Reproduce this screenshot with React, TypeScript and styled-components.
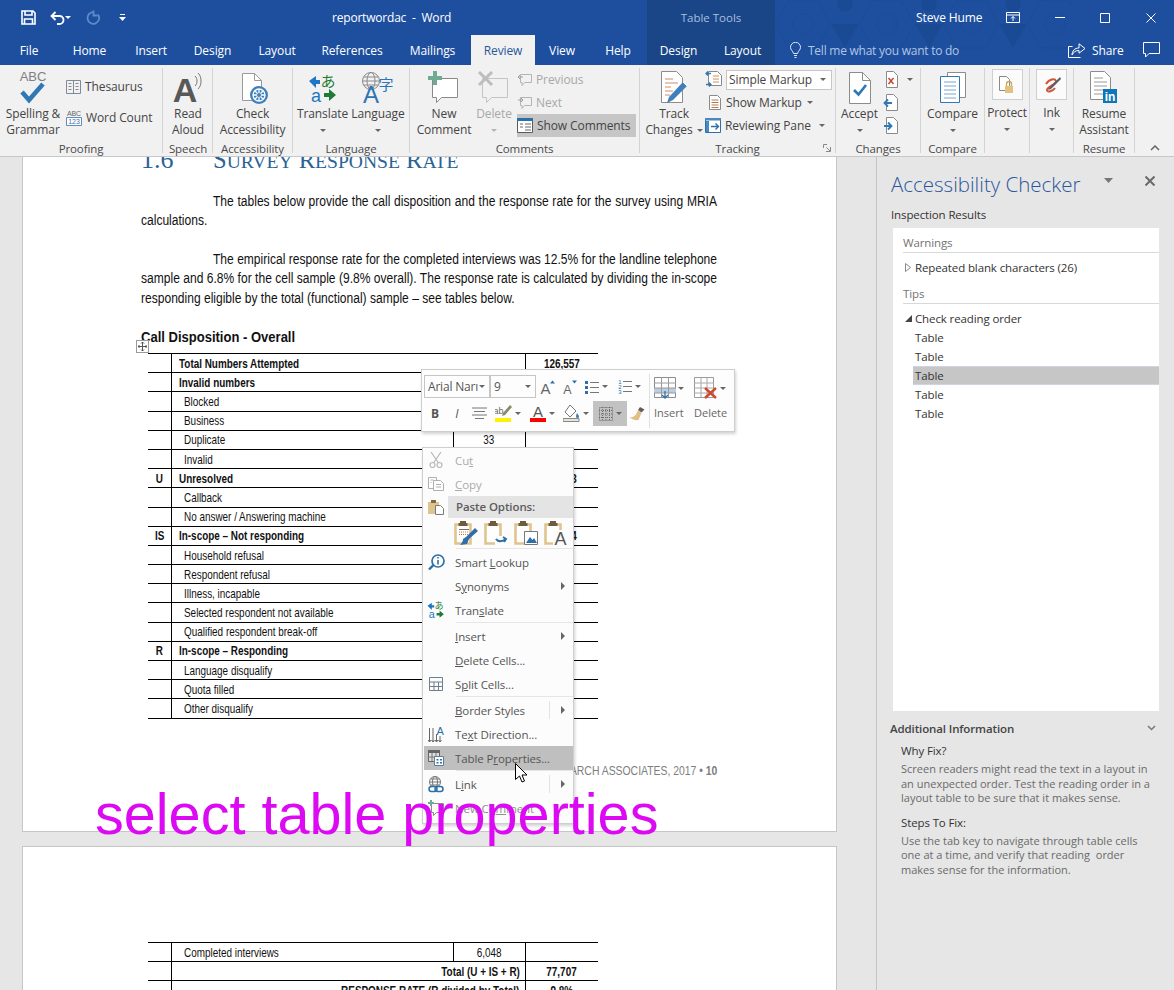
import React from 'react';
import styled, { createGlobalStyle } from 'styled-components';

const GlobalStyle = createGlobalStyle`
  html, body { margin: 0; padding: 0; background: #e6e6e6; }
  body { font-family: "Open Sans", "Noto Sans", Arial, sans-serif; font-size: 12px; color: #444; }
  svg { display: block; flex: none; }
`;

const arial = `"Liberation Sans", Arial, sans-serif`;
// Arial Narrow isn't installed, Liberation Sans squeezed to its width
const squeeze = 0.82;

const Window = styled.div`
  position: relative;
  width: 1174px;
  height: 990px;
  overflow: hidden;
  display: flex;
  flex-direction: column;
`;

/* ---------- title bar + tabs ---------- */
const Header = styled.div`
  position: relative;
  background: #1e4f9f;
  color: #fff;
  flex: none;
`;
const Pattern = styled.svg`
  position: absolute;
  left: 775px;
  top: 0;
`;
const TitleRow = styled.div`
  position: relative;
  display: flex;
  height: 35px;
  align-items: stretch;
`;
const LeftZone = styled.div`
  width: 647px;
  display: flex;
  align-items: center;
  padding-left: 21px;
  box-sizing: border-box;
`;
const QatSlot = styled.div<{ $w: number }>`
  width: ${(p) => p.$w}px;
  display: flex;
  align-items: center;
`;
const DocTitle = styled.div`
  margin-left: 206px;
  font-size: 12px;
  letter-spacing: -0.2px;
  white-space: pre;
`;
const ToolsLabel = styled.div`
  width: 128px;
  background: #1a4687;
  color: #a6bfe2;
  font-size: 11.5px;
  display: flex;
  align-items: center;
  justify-content: center;
`;
const RightZone = styled.div`
  flex: 1;
  display: flex;
  align-items: center;
  padding-left: 141px;
`;
const UserName = styled.div`
  width: 90px;
  font-size: 12px;
  letter-spacing: -0.1px;
`;
const WinButton = styled.div<{ $w: number }>`
  width: ${(p) => p.$w}px;
  display: flex;
  align-items: center;
`;
const TabRow = styled.div`
  position: relative;
  display: flex;
  height: 30px;
  align-items: stretch;
`;
const Tab = styled.div<{ $w: number; $active?: boolean; $context?: boolean }>`
  width: ${(p) => p.$w}px;
  display: flex;
  align-items: center;
  justify-content: center;
  font-size: 12px;
  letter-spacing: -0.1px;
  color: ${(p) => (p.$active ? '#2b579a' : '#fff')};
  background: ${(p) => (p.$active ? '#f1f1f1' : p.$context ? '#1a4687' : 'transparent')};
`;
const TellMe = styled.div`
  margin-left: 15px;
  display: flex;
  align-items: center;
  gap: 7px;
  color: #b0c5e4;
  font-size: 12px;
  letter-spacing: -0.25px;
`;
const ShareBox = styled.div`
  margin-left: auto;
  display: flex;
  align-items: center;
  gap: 6px;
  padding-right: 14px;
`;
const ShareLabel = styled.span`
  width: 45px;
  letter-spacing: -0.1px;
`;

/* ---------- ribbon ---------- */
const Ribbon = styled.div`
  flex: none;
  height: 92px;
  box-sizing: border-box;
  background: #f1f1f1;
  border-bottom: 1px solid #c8c8c8;
  display: flex;
  padding-top: 3px;
  position: relative;
  z-index: 2;
  letter-spacing: -0.1px;
`;
const Group = styled.div<{ $w: number; $last?: boolean }>`
  width: ${(p) => p.$w}px;
  height: 85px;
  box-sizing: border-box;
  border-right: ${(p) => (p.$last ? 'none' : '1px solid #d4d4d4')};
  display: grid;
  grid-template-rows: 73px 12px;
  flex: none;
`;
const GroupBody = styled.div`
  display: flex;
  align-items: flex-start;
`;
const GroupLabel = styled.div`
  display: flex;
  justify-content: center;
  align-items: center;
  height: 14px;
  font-size: 11.5px;
  color: #4a4a4a;
  position: relative;
`;
const Launcher = styled.div`
  position: absolute;
  right: 4px;
  top: 3px;
`;
const Large = styled.div<{ $w: number; $dim?: boolean }>`
  width: ${(p) => p.$w}px;
  flex: none;
  display: flex;
  flex-direction: column;
  align-items: center;
  padding-top: 2px;
  font-size: 12px;
  line-height: 16px;
  text-align: center;
  color: ${(p) => (p.$dim ? '#a8a8a8' : '#444')};
  white-space: nowrap;
`;
const LargeText = styled.div``;
const CaretAfter = styled.span`
  display: inline-block;
  vertical-align: middle;
  margin-left: 4px;
  width: 0;
  height: 0;
  border-left: 3px solid transparent;
  border-right: 3px solid transparent;
  border-top: 3px solid #666;
`;
const IconSlot = styled.div`
  height: 36px;
  display: flex;
  align-items: center;
  justify-content: center;
`;
const FramedIcon = styled.div`
  width: 29px;
  height: 29px;
  background: #fbfbfb;
  border: 1px solid #cfcfcf;
  display: flex;
  align-items: center;
  justify-content: center;
  margin-bottom: 5px;
  margin-top: -1px;
`;
const Caret = styled.span<{ $c?: string }>`
  display: inline-block;
  width: 0;
  height: 0;
  border-left: 3px solid transparent;
  border-right: 3px solid transparent;
  border-top: 3px solid ${(p) => p.$c ?? '#666'};
  flex: none;
`;
const CaretLine = styled.div`
  height: 16px;
  display: flex;
  align-items: center;
  justify-content: center;
`;
const SmallCol = styled.div<{ $ml?: number; $rowH?: number; $pt?: number }>`
  margin-left: ${(p) => p.$ml ?? 0}px;
  padding-top: ${(p) => p.$pt ?? 0}px;
  display: grid;
  grid-auto-rows: ${(p) => p.$rowH ?? 23}px;
`;
const SmallRow = styled.div<{ $dim?: boolean; $on?: boolean; $w?: number; $gap?: number; $ml?: number }>`
  display: flex;
  align-items: center;
  gap: ${(p) => p.$gap ?? 4}px;
  margin-left: ${(p) => p.$ml ?? 0}px;
  width: ${(p) => (p.$w ? `${p.$w}px` : 'auto')};
  font-size: 12px;
  white-space: nowrap;
  color: ${(p) => (p.$dim ? '#a8a8a8' : '#444')};
  background: ${(p) => (p.$on ? '#c6c6c6' : 'transparent')};
`;
const MarkupBox = styled.div`
  width: 106px;
  height: 20px;
  box-sizing: border-box;
  background: #fff;
  border: 1px solid #c6c6c6;
  display: flex;
  align-items: center;
  justify-content: space-between;
  padding: 0 5px 0 2px;
`;
const SpreadLabel = styled.span<{ $w: number }>`
  width: ${(p) => p.$w}px;
  display: inline-flex;
  justify-content: space-between;
  align-items: center;
`;

/* ---------- document ---------- */
const Body = styled.div`
  flex: 1;
  display: flex;
  min-height: 0;
`;
const DocArea = styled.div`
  width: 876px;
  flex: none;
  overflow: hidden;
  padding-left: 22px;
  box-sizing: border-box;
  background: #e6e6e6;
`;
const Page = styled.div<{ $first?: boolean }>`
  width: 815px;
  box-sizing: border-box;
  background: #fff;
  border: 1px solid #c6c6c6;
  padding-left: 118px;
  margin-top: ${(p) => (p.$first ? '-40px' : '14px')};
  height: ${(p) => (p.$first ? '715px' : '300px')};
  padding-top: ${(p) => (p.$first ? '30px' : '95px')};
  font-family: ${arial};
  color: #111;
`;
const Heading = styled.div`
  display: flex;
  height: 24px;
  font-family: "Liberation Serif", "Times New Roman", serif;
  font-size: 24.5px;
  line-height: 24px;
  color: #2a6396;
  white-space: pre;
`;
const HeadingNum = styled.span`
  width: 72px;
  font-size: 26px;
`;
const SmallCap = styled.span`
  font-size: 0.8em;
`;
const Para = styled.div<{ $mt?: number }>`
  width: ${576 / squeeze}px;
  font-size: 14.7px;
  line-height: 19.4px;
  margin-top: ${(p) => p.$mt ?? 20}px;
  transform: scaleX(${squeeze});
  transform-origin: left top;
`;
const Line = styled.div<{ $indent?: boolean; $just?: boolean }>`
  padding-left: ${(p) => (p.$indent ? `${72 / squeeze}px` : '0')};
  text-align: ${(p) => (p.$just ? 'justify' : 'left')};
  text-align-last: ${(p) => (p.$just ? 'justify' : 'left')};
`;
const TableTitle = styled.div`
  position: relative;
  margin-top: 20px;
  font-weight: bold;
  font-size: 14px;
  line-height: 19px;
  height: 25px;
`;
const TitleText = styled.span`
  display: inline-block;
  transform: scaleX(0.93);
  transform-origin: left;
`;
const MoveHandle = styled.div`
  position: absolute;
  left: -5px;
  top: 12px;
  width: 11px;
  height: 11px;
  background: #fff;
  border: 1px solid #9a9a9a;
  display: flex;
  align-items: center;
  justify-content: center;
`;
const DataTable = styled.table`
  margin-left: 7px;
  width: 450px;
  table-layout: fixed;
  border-collapse: collapse;
`;
const Row = styled.tr`
  height: 19.2px;
`;
const Cell = styled.td<{ $bold?: boolean; $align?: string; $indent?: number; $noLeft?: boolean }>`
  box-sizing: border-box;
  padding: 1px ${(p) => (p.$align === 'right' ? '5px' : '0')} 0 ${(p) => p.$indent ?? 0}px;
  height: 19.2px;
  font-size: 12.1px;
  line-height: 14px;
  white-space: nowrap;
  font-weight: ${(p) => (p.$bold ? 'bold' : 'normal')};
  text-align: ${(p) => p.$align ?? 'left'};
  border-top: 1.4px solid #000;
  border-bottom: 1.4px solid #000;
  border-left: ${(p) => (p.$noLeft ? 'none' : '1.4px solid #000')};
`;
const CellText = styled.span<{ $origin?: string }>`
  display: inline-block;
  transform: scaleX(${squeeze});
  transform-origin: ${(p) => p.$origin ?? 'left'} center;
`;
const PageFooter = styled.div`
  width: 576px;
  margin-top: 45px;
  text-align: right;
  font-size: 12.7px;
  color: #7d7d7d;
  white-space: nowrap;
`;
const FooterText = styled.span`
  display: inline-block;
  transform: scaleX(${squeeze});
  transform-origin: right center;
`;

/* ---------- task pane ---------- */
const Pane = styled.div`
  flex: 1;
  box-sizing: border-box;
  border-left: 1px solid #c4c4c4;
  background: #e6e6e6;
  padding: 13px 15px 0 14px;
  display: flex;
  flex-direction: column;
  font-size: 11.5px;
  letter-spacing: -0.12px;
`;
const PaneTop = styled.div`
  display: flex;
  align-items: center;
  height: 28px;
`;
const PaneTitle = styled.div`
  font-size: 20.5px;
  font-weight: 300;
  letter-spacing: 0;
  color: #2b579a;
  width: 213px;
  white-space: nowrap;
`;
const PaneMenu = styled.div`
  padding-bottom: 7px;
`;
const PaneClose = styled.div`
  margin-left: 32px;
  padding-bottom: 7px;
`;
const Inspection = styled.div`
  margin-top: 8px;
  line-height: 18px;
  color: #333;
`;
const ListBox = styled.div`
  margin: 4px 0 0 2px;
  height: 483px;
  box-sizing: border-box;
  background: #fff;
  padding: 7px 0 0 10px;
`;
const ListHead = styled.div`
  height: 17px;
  line-height: 15px;
  color: #737373;
  border-bottom: 1px solid #d8d8d8;
`;
const ListRow = styled.div<{ $sel?: boolean }>`
  height: 19px;
  box-sizing: border-box;
  margin-left: 10px;
  padding-left: 2px;
  line-height: 19px;
  color: #333;
  background: ${(p) => (p.$sel ? '#c6c6c6' : 'transparent')};
  border-top: 1px solid ${(p) => (p.$sel ? '#cfd4e4' : 'transparent')};
  border-bottom: 1px solid ${(p) => (p.$sel ? '#cfd4e4' : 'transparent')};
  display: flex;
  align-items: center;
`;
const ListGroup = styled.div`
  margin-bottom: 9px;
  padding-top: 5px;
`;
const Twist = styled.span`
  width: 10px;
  margin-left: -10px;
  display: inline-flex;
  flex: none;
`;
const InfoHead = styled.div`
  display: flex;
  align-items: center;
  justify-content: space-between;
  margin: 8px 0 0 -1px;
  height: 18px;
  font-weight: 600;
  color: #444;
  padding-right: 3px;
`;
const InfoTitle = styled.div`
  margin: 5px 0 0 10px;
  line-height: 17px;
  color: #333;
`;
const InfoText = styled.div`
  margin: 3px 0 0 10px;
  font-size: 11px;
  line-height: 14.6px;
  color: #6a6a6a;
  letter-spacing: 0;
  white-space: pre;
  & + ${InfoTitle} {
    margin-top: 8px;
  }
`;

/* ---------- overlays ---------- */
const MiniBar = styled.div`
  position: absolute;
  left: 421px;
  top: 369px;
  width: 314px;
  height: 63px;
  box-sizing: border-box;
  background: #fdfdfd;
  border: 1px solid #cdcdcd;
  box-shadow: 1px 2px 3px rgba(0, 0, 0, 0.18);
  display: flex;
  padding: 4px 0 0 2px;
  z-index: 3;
`;
const MiniLeft = styled.div`
  width: 225px;
  display: flex;
  flex-direction: column;
  gap: 2px;
  border-right: 1px solid #e0e0e0;
  height: 54px;
`;
const MiniRow = styled.div`
  display: flex;
  align-items: center;
  height: 25px;
`;
const Combo = styled.div<{ $w: number }>`
  width: ${(p) => p.$w}px;
  height: 23px;
  box-sizing: border-box;
  border: 1px solid #c6c6c6;
  display: flex;
  align-items: center;
  justify-content: space-between;
  padding: 0 4px 0 3px;
  color: #555;
  font-size: 12px;
  letter-spacing: -0.2px;
  white-space: nowrap;
  overflow: hidden;
`;
const MiniTool = styled.div<{ $w: number; $on?: boolean }>`
  width: ${(p) => p.$w}px;
  height: 25px;
  display: flex;
  align-items: center;
  justify-content: center;
  gap: 3px;
  color: #555;
  background: ${(p) => (p.$on ? '#c2c2c2' : 'transparent')};
  flex: none;
`;
const MiniRight = styled.div`
  display: flex;
  padding-left: 4px;
`;
const TableTool = styled.div`
  width: 40px;
  display: flex;
  flex-direction: column;
  align-items: flex-start;
  font-size: 11px;
  color: #666;
  line-height: 16px;
`;
const TableToolIcon = styled.div`
  height: 28px;
  display: flex;
  align-items: center;
  gap: 2px;
  margin-bottom: 3px;
`;
const Menu = styled.div`
  position: absolute;
  left: 422px;
  top: 447px;
  width: 152px;
  height: 377px;
  box-sizing: border-box;
  background: #fcfcfc;
  border: 1px solid #cfcfcf;
  box-shadow: 1px 2px 3px rgba(0, 0, 0, 0.18);
  padding: 0 0 0 1px;
  z-index: 3;
  font-size: 11.5px;
  letter-spacing: -0.1px;
`;
const MenuItem = styled.div<{ $dim?: boolean; $active?: boolean; $soft?: boolean }>`
  width: 149px;
  height: 24px;
  display: grid;
  grid-template-columns: 31px 1fr 24px;
  align-items: center;
  color: ${(p) => (p.$dim ? '#ababab' : p.$soft ? '#8e8e8e' : '#555')};
  background: ${(p) => (p.$active ? '#bfbfbf' : 'transparent')};
  white-space: nowrap;
`;
const MenuIcon = styled.div`
  width: 24px;
  display: flex;
  justify-content: center;
`;
const MenuArrow = styled.div<{ $split?: boolean }>`
  height: 18px;
  display: flex;
  align-items: center;
  justify-content: flex-end;
  padding-right: 8px;
  position: relative;
  border-left: ${(p) => (p.$split ? '1px solid #e4e4e4' : 'none')};
  &::after {
    content: '';
    width: 0;
    height: 0;
    border-top: 4px solid transparent;
    border-bottom: 4px solid transparent;
    border-left: 4px solid #666;
  }
`;
const MenuSep = styled.div`
  height: 2px;
  margin-left: 32px;
  width: 117px;
  background: linear-gradient(#e6e6e6 50%, transparent 50%);
`;
const PasteHead = styled.div`
  display: flex;
  height: 22px;
  align-items: center;
`;
const PasteIconWrap = styled.div`
  width: 24px;
  display: flex;
  justify-content: center;
`;
const PasteLabel = styled.div`
  width: 125px;
  height: 22px;
  box-sizing: border-box;
  padding-left: 8px;
  background: #e4e4e4;
  font-weight: 600;
  color: #5c5c5c;
  line-height: 22px;
`;
const PasteRow = styled.div`
  height: 30px;
  padding-left: 30px;
  display: flex;
  gap: 6px;
  align-items: center;
`;
const Caption = styled.div`
  position: absolute;
  left: 95px;
  top: 780px;
  z-index: 4;
  font-family: ${arial};
  font-size: 57.6px;
  line-height: 68px;
  color: #dc0af2;
  white-space: nowrap;
`;
const Pointer = styled.svg`
  position: absolute;
  left: 515px;
  top: 763px;
  z-index: 5;
`;

/* ---------- drawings ---------- */
const uiFont = 'Liberation Sans, Arial, sans-serif';
const cjk = 'Noto Sans CJK JP, sans-serif';
const blue = '#2f77b5';
const tan = '#e0c48f';

const SaveIcon = () => (
  <svg width="15" height="15" viewBox="0 0 15 15" fill="none" stroke="#fff" strokeWidth="1.6">
    <path d="M1 1h11l2 2v11H1z" />
    <path d="M4 1v4h7V1M3.500 14V9h8v5" />
  </svg>
);
const UndoIcon = () => (
  <svg width="15" height="14" viewBox="0 0 15 14" fill="none" stroke="#fff" strokeWidth="1.8">
    <path d="M5.500 1 1.500 5l4 4" />
    <path d="M2 5h7.500a4 4 0 0 1 0 8H7" />
  </svg>
);
const RedoIcon = () => (
  <svg width="14" height="15" viewBox="0 0 14 15" fill="none" stroke="#5e8aca" strokeWidth="1.800">
    <path d="M8 2.200a5.800 5.800 0 1 0 4 2.300" />
    <path d="M7.500.5v5h4" />
  </svg>
);
const CustomizeIcon = () => (
  <svg width="7" height="8" viewBox="0 0 7 8" fill="#fff">
    <path d="M1 0h5v1H1zM0 3h7L3.500 7z" />
  </svg>
);
const DisplayIcon = () => (
  <svg width="14" height="11" viewBox="0 0 14 11" fill="none" stroke="#fff">
    <path d="M.5.5h13v10H.5zM.5 3h13" />
    <path d="M7 9V4.500M5 6.500l2-2 2 2" />
  </svg>
);
const MinIcon = () => (
  <svg width="10" height="2" viewBox="0 0 10 2"><path d="M0 .5h10" stroke="#fff" /></svg>
);
const MaxIcon = () => (
  <svg width="10" height="10" viewBox="0 0 10 10"><path d="M.5.5h9v9h-9z" fill="none" stroke="#fff" /></svg>
);
const CloseIcon = ({ c = '#fff', s = 10, w = 1 }: { c?: string; s?: number; w?: number }) => (
  <svg width={s} height={s} viewBox="0 0 10 10"><path d="M.5.5l9 9M9.500.5l-9 9" stroke={c} strokeWidth={w} /></svg>
);
const BulbIcon = () => (
  <svg width="11" height="16" viewBox="0 0 11 16" fill="none" stroke="#dfe8f5">
    <path d="M3.500 11.500C3 9 .5 8 .5 5.300a5 5 0 0 1 10 0c0 2.700-2.500 3.700-3 6.200zM4 13.500h3M4.500 15.500h2" />
  </svg>
);
const ShareIcon = () => (
  <svg width="18" height="15" viewBox="0 0 18 15" fill="none" stroke="#fff">
    <path d="M12.500 14.500H.5V3.500h4" />
    <path d="M11 .8 17 5.500l-6 4.700V7.500C7.500 7.500 5.500 9 4 12c.2-4 2.500-7 7-7z" />
  </svg>
);
const CommentIcon = () => (
  <svg width="17" height="16" viewBox="0 0 17 16" fill="none" stroke="#fff">
    <path d="M.5.5h16v11H6l-3.500 3.500v-3.500h-2z" />
  </svg>
);
const SpellIcon = () => (
  <svg width="34" height="36" viewBox="0 0 34 36">
    <text x="17" y="11" textAnchor="middle" fontFamily={uiFont} fontSize="13" fill="#808080">ABC</text>
    <path d="M6 22l7 8 14-16" fill="none" stroke={blue} strokeWidth="4.500" />
  </svg>
);
const ThesaurusIcon = () => (
  <svg width="15" height="14" viewBox="0 0 15 14" fill="none" stroke="#7c8b9b">
    <path d="M.5.500h14v13H.5zM7.500.5v13" />
    <path d="M2.500 3.500h3M2.500 6.500h3M2.500 9.500h3M9.500 3.500h3M9.500 6.500h3M9.500 9.500h3" stroke="#8a8a8a" />
  </svg>
);
const WordCountIcon = () => (
  <svg width="16" height="17" viewBox="0 0 16 17">
    <text x="8" y="6.500" textAnchor="middle" fontFamily={uiFont} fontSize="7" fill="#666">ABC</text>
    <path d="M.5 8.500h15v8H.5z" fill="#fff" stroke="#5f8fbe" />
    <text x="8" y="15" textAnchor="middle" fontFamily={uiFont} fontSize="7" fill="#3f6fa0">123</text>
  </svg>
);
const ReadAloudIcon = () => (
  <svg width="30" height="36" viewBox="0 0 30 36">
    <text x="12" y="32" textAnchor="middle" fontFamily={uiFont} fontWeight="bold" fontSize="34" fill="#585858">A</text>
    <path d="M22 6c1.500 1.500 2 3 2 5s-.5 3.500-2 5M25 3c2.400 2.300 3 5 3 8s-.6 5.700-3 8" fill="none" stroke="#777" />
  </svg>
);
const AccessIcon = () => (
  <svg width="32" height="36" viewBox="0 0 32 36">
    <path d="M5.500 3.500h12l7 7v20h-19z" fill="#fff" stroke="#9a9a9a" />
    <path d="M17.500 3.500v7h7" fill="none" stroke="#9a9a9a" />
    <circle cx="22" cy="25" r="9" fill="#3f80bb" />
    <g stroke="#fff" strokeWidth="1.300" fill="none">
      <circle cx="22" cy="25" r="6" />
      <path d="M22 19v12M16 25h12M18 21l8 8M26 21l-8 8" />
    </g>
    <circle cx="22" cy="25" r="2" fill="#3f80bb" />
  </svg>
);
const TranslateIcon = ({ s = 30 }: { s?: number }) => (
  <svg width={s} height={s} viewBox="0 0 30 30">
    <path d="M1 8l7-5v4h4v4H8v4z" fill="#1d77c2" />
    <text x="20" y="14" textAnchor="middle" fontFamily={cjk} fontSize="15" fill="#1e7b34">あ</text>
    <text x="8" y="29" textAnchor="middle" fontFamily={uiFont} fontSize="18" fill="#1d77c2">a</text>
    <path d="M16 22l7-6v4h5v4h-5v4z" fill="#1e7b34" transform="rotate(180 22 22)" />
  </svg>
);
const LanguageIcon = () => (
  <svg width="34" height="34" viewBox="0 0 34 34">
    <g fill="none" stroke="#8a8a8a">
      <circle cx="10" cy="10" r="8.500" />
      <ellipse cx="10" cy="10" rx="4" ry="8.500" />
      <path d="M1.500 10h17M2.500 6h15M2.500 14h15" />
    </g>
    <text x="10" y="32" textAnchor="middle" fontFamily={uiFont} fontSize="24" fill="#2e75b6">A</text>
    <text x="25" y="19" textAnchor="middle" fontFamily={cjk} fontSize="15" fill="#2e75b6">字</text>
  </svg>
);
const NewCommentIcon = () => (
  <svg width="32" height="34" viewBox="0 0 32 34">
    <path d="M4.500 7.500h25v19h-16l-5 5v-5h-4z" fill="#fff" stroke="#8a8a8a" />
    <path d="M5 0h4v5h5v4H9v5H5V9H0V5h5z" fill="#6faa92" />
  </svg>
);
const DeleteCommentIcon = () => (
  <svg width="32" height="34" viewBox="0 0 32 34">
    <path d="M4.500 7.500h25v19h-16l-5 5v-5h-4z" fill="none" stroke="#c4c4c4" />
    <path d="M1 1l13 13M14 1 1 14" stroke="#bdbdbd" strokeWidth="3" />
  </svg>
);
const StepIcon = ({ next = false }: { next?: boolean }) => (
  <svg width="15" height="15" viewBox="0 0 15 15" fill="none" stroke="#b4b4b4">
    <path d="M3.500 2.500h11v8h-7l-2.500 3v-3h-1.500z" />
    <path d={next ? 'M1 5h5M4 3l2 2-2 2' : 'M1 5h5M3 3 1 5l2 2'} stroke="#a0a0a0" />
  </svg>
);
const ShowCommentsIcon = () => (
  <svg width="16" height="15" viewBox="0 0 16 15">
    <path d="M.5.500h15v14H.5z" fill="#fff" stroke="#5c5c5c" />
    <path d="M0 0h16v3H0z" fill="#2d6fa9" />
    <path d="M8 6h6M8 9h6M8 12h6M3 6h3M3 9h3" stroke="#6a6a6a" />
  </svg>
);
const TrackIcon = () => (
  <svg width="32" height="36" viewBox="0 0 32 36">
    <path d="M3.500 1.500h15l6 6v25h-21z" fill="#fff" stroke="#8c8c8c" />
    <path d="M7 9h8M7 13h13M7 17h6M7 21h8M7 25h5" stroke="#d08a6a" />
    <path d="M9 33l2-6L25 12l4 4-14 14z" fill="#3f80bb" />
    <path d="M25 12l4 4" stroke="#fff" />
  </svg>
);
const DisplayReviewIcon = () => (
  <svg width="17" height="18" viewBox="0 0 17 18">
    <path d="M3.500.5h9l4 4v10h-13z" fill="#fff" stroke="#8a8a8a" />
    <path d="M8 5h6M8 8h6M8 11h6" stroke="#c9925f" />
    <path d="M6 2.500H1M3 .5l-2 2 2 2M1 13.500h5M4 11.500l2 2-2 2" fill="none" stroke={blue} strokeWidth="1.300" />
  </svg>
);
const ShowMarkupIcon = () => (
  <svg width="12" height="15" viewBox="0 0 12 15">
    <path d="M.5.500h8l3 3v11H.5z" fill="#fff" stroke="#8a8a8a" />
    <path d="M2.500 5h7M2.500 7.500h7M2.500 10h7M2.500 12.500h7" stroke="#b97a4e" />
  </svg>
);
const ReviewPaneIcon = () => (
  <svg width="16" height="15" viewBox="0 0 16 15">
    <path d="M.5.500h15v14H.5z" fill="#fff" stroke="#2d6fa9" />
    <path d="M0 0h16v2.500H0zM1 3h3v11H1z" fill="#4a89bf" />
    <path d="M6 8.500h7M10.500 5.500l3 3-3 3" fill="none" stroke="#2d6fa9" strokeWidth="1.400" />
  </svg>
);
const AcceptIcon = () => (
  <svg width="22" height="32" viewBox="0 0 22 32">
    <path d="M.5.500h13l8 8v23H.5z" fill="#fff" stroke="#8c8c8c" />
    <path d="M13.500.5v8h8" fill="none" stroke="#8c8c8c" />
    <path d="M5 18l4.500 4.500L17 13" fill="none" stroke={blue} strokeWidth="2.600" />
  </svg>
);
const SmallDoc = ({ kind }: { kind: 'x' | 'prev' | 'next' }) => (
  <svg width="15" height="17" viewBox="0 0 15 17">
    <path d="M3.500.5h7l4 4v12h-11z" fill="#fff" stroke="#8a8a8a" />
    {kind === 'x' && <path d="M5.500 7l5 6M10.500 7l-5 6" stroke="#c7452f" strokeWidth="1.500" />}
    {kind === 'prev' && <path d="M9 9H1.500M5 5.500 1.500 9 5 12.500" fill="none" stroke={blue} strokeWidth="1.800" />}
    {kind === 'next' && <path d="M1 9h7.500M5 5.500 8.500 9 5 12.500" fill="none" stroke={blue} strokeWidth="1.800" />}
  </svg>
);
const CompareIcon = () => (
  <svg width="26" height="32" viewBox="0 0 26 32">
    <path d="M7.500.5h18v25h-18z" fill="#fff" stroke="#8c8c8c" />
    <path d="M.5 4.500h19v26H.5z" fill="#fff" stroke={blue} />
    <path d="M4 10h12M4 14h12M4 18h12M4 22h12M4 26h12" stroke="#78a8d0" />
  </svg>
);
const ProtectIcon = () => (
  <svg width="16" height="18" viewBox="0 0 16 18">
    <path d="M.5.500h7l3 3v11H.5z" fill="#fff" stroke="#8a8a8a" />
    <path d="M7.500 10V8a2.500 2.500 0 0 1 5 0v2" fill="none" stroke="#c9a662" strokeWidth="1.300" />
    <path d="M6 10h8v7H6z" fill="#e2c27e" />
  </svg>
);
const InkIcon = () => (
  <svg width="20" height="20" viewBox="0 0 20 20" fill="none">
    <path d="M4 9c3-5 9-6 10-3s-9 6-9 9 6 1 8-2" stroke="#d2553a" strokeWidth="2" />
    <path d="M18 2 8 12l-2 3 3-1L19 4z" fill="#54606c" />
  </svg>
);
const ResumeIcon = () => (
  <svg width="28" height="34" viewBox="0 0 28 34">
    <path d="M.5.500h14l6 6v22H.5z" fill="#fff" stroke="#8c8c8c" />
    <path d="M4 7h9M4 11h13M4 15h13M4 19h9M4 23h9" stroke="#9a9a9a" />
    <path d="M13 18h14v14H13z" fill="#0e76b8" />
    <text x="20" y="29.500" textAnchor="middle" fontFamily={uiFont} fontWeight="bold" fontSize="12" fill="#fff">in</text>
  </svg>
);
const LauncherIcon = () => (
  <svg width="8" height="8" viewBox="0 0 8 8" fill="none" stroke="#888">
    <path d="M.5 4V.5H4M7.500 7.500H3M7.500 7.500V3M7 7 3.500 3.500" />
  </svg>
);
const CollapseIcon = () => (
  <svg width="10" height="6" viewBox="0 0 10 6"><path d="M1 5l4-4 4 4" fill="none" stroke="#666" strokeWidth="1.500" /></svg>
);
const DragIcon = () => (
  <svg width="9" height="9" viewBox="0 0 9 9" fill="none" stroke="#555">
    <path d="M4.500 0v9M0 4.500h9M3 1.500 4.500 0 6 1.500M3 7.500 4.500 9 6 7.500M1.500 3 0 4.500 1.500 6M7.500 3 9 4.500 7.500 6" />
  </svg>
);

/* mini toolbar */
const GrowIcon = ({ up }: { up: boolean }) => (
  <svg width="15" height="14" viewBox="0 0 15 14">
    <text x="5.500" y="13.500" textAnchor="middle" fontFamily={uiFont} fontSize={up ? 15 : 12.500} fill="#666">A</text>
    <path d={up ? 'M10 3.500 12.500.5l2.500 3z' : 'M10 .5l2.500 3 2.500-3z'} fill="#2e6fa7" />
  </svg>
);
const BulletsIcon = () => (
  <svg width="14" height="14" viewBox="0 0 14 14">
    <path d="M0 1h3v3H0zM0 6h3v3H0zM0 11h3v3H0z" fill="#2e6fa7" />
    <path d="M5 2.500h9M5 7.500h9M5 12.500h9" stroke="#777" />
  </svg>
);
const NumberingIcon = () => (
  <svg width="14" height="15" viewBox="0 0 14 15">
    <text x="2" y="5" textAnchor="middle" fontFamily={uiFont} fontSize="6" fill="#2e6fa7">1</text>
    <text x="2" y="10" textAnchor="middle" fontFamily={uiFont} fontSize="6" fill="#2e6fa7">2</text>
    <text x="2" y="15" textAnchor="middle" fontFamily={uiFont} fontSize="6" fill="#2e6fa7">3</text>
    <path d="M5 2.500h9M5 7.500h9M5 12.500h9" stroke="#777" />
  </svg>
);
const InsertTableIcon = () => (
  <svg width="22" height="22" viewBox="0 0 22 22">
    <path d="M.5.500h21v20H.5z" fill="#fff" stroke="#8c8c8c" />
    <path d="M0 11h22v5H0z" fill="#b9cde3" />
    <path d="M7.500 0v20M14.500 0v20M0 6h22M0 11h22M0 16h22" stroke="#9a9a9a" />
    <path d="M11 14v7M8 18l3 3 3-3" fill="none" stroke="#2e6fa7" strokeWidth="1.300" />
  </svg>
);
const DeleteTableIcon = () => (
  <svg width="24" height="22" viewBox="0 0 24 22">
    <path d="M.5.500h19v20H.5z" fill="#fff" stroke="#9a9a9a" />
    <path d="M7 0v20M13 0v20M0 6h20M0 11h20M0 16h20" stroke="#a8a8a8" />
    <path d="M11 11l11 10M22 11 11 21" stroke="#cf4a2c" strokeWidth="2.400" />
  </svg>
);
const AlignIcon = () => (
  <svg width="15" height="13" viewBox="0 0 15 13"><path d="M0 1h15M2 4.500h11M0 8h15M3 11.500h9" stroke="#777" /></svg>
);
const HighlightIcon = () => (
  <svg width="17" height="17" viewBox="0 0 17 17">
    <text x="3.500" y="9" textAnchor="middle" fontFamily={uiFont} fontSize="9" fill="#666">ab</text>
    <path d="M15 0l2 2-7 8-3 1 1-3z" fill="#8a8a6a" />
    <path d="M0 13h16v4H0z" fill="#fff200" />
  </svg>
);
const FontColorIcon = () => (
  <svg width="16" height="17" viewBox="0 0 16 17">
    <text x="8" y="12" textAnchor="middle" fontFamily={uiFont} fontSize="15" fill="#555">A</text>
    <path d="M0 13h16v4H0z" fill="#f00" />
  </svg>
);
const ShadeIcon = () => (
  <svg width="17" height="17" viewBox="0 0 17 17">
    <path d="M7 0l6 6-6 6-5-5z" fill="#fff" stroke="#777" />
    <path d="M14 8c1 1.500 2 2.500 2 3.500a1.500 1.500 0 0 1-3 0c0-1 .5-2 1-3.500z" fill="#3d7fb8" />
    <path d="M0 13.500h16v3H0z" fill="#e9e4d8" stroke="#888" />
  </svg>
);
const BordersIcon = () => (
  <svg width="14" height="14" viewBox="0 0 14 14" fill="none" stroke="#6a6a6a" strokeDasharray="1 1">
    <path d="M.5.500h13v13H.5zM7 0v14M0 7h14M3.500 0v14M10.500 0v14M0 3.500h14M0 10.500h14" />
  </svg>
);
const PainterIcon = () => (
  <svg width="17" height="15" viewBox="0 0 17 15">
    <path d="M11 1l4.500 2.500-3 3L9 4z" fill="#5f5f5f" />
    <path d="M9 4l3.500 3-3 7c-3 .5-6-.500-9-2.500 3 0 5-1 6.500-3z" fill="#e0bf85" />
  </svg>
);

/* context menu */
const CutIcon = () => (
  <svg width="14" height="16" viewBox="0 0 14 16" fill="none" stroke="#b8b8b8" strokeWidth="1.200">
    <path d="M2 0l7.500 11M12 0 4.500 11" />
    <circle cx="3.500" cy="13" r="2.500" />
    <circle cx="10.500" cy="13" r="2.500" />
  </svg>
);
const CopyIcon = () => (
  <svg width="16" height="14" viewBox="0 0 16 14" fill="#fff" stroke="#b0b0b0">
    <path d="M.5.500h8v11h-8z" />
    <path d="M5.500 3.500h7l3 3v7h-10z" />
    <path d="M8 7.500h5M8 10h5M2.500 3h3M2.500 5.500h1" />
  </svg>
);
const PasteMenuIcon = () => (
  <svg width="16" height="16" viewBox="0 0 16 16">
    <path d="M0 3h11v12H0z" fill={tan} />
    <path d="M3 1h5v3H3z" fill="#7f6a45" />
    <path d="M7.500 6.500h5l3 3v6h-8z" fill="#fff" stroke="#7a7a7a" />
  </svg>
);
const PasteOption = ({ kind }: { kind: 'keep' | 'merge' | 'image' | 'text' }) => (
  <svg width="24" height="24" viewBox="0 0 24 24">
    <path d="M1.500 3.500h15v19h-15z" fill="#fff" stroke={tan} strokeWidth="2.600" />
    <path d="M6 0h6v2h1.500v3h-9V2H6z" fill="#6e5c3e" />
    {kind === 'keep' && (
      <g>
        <path d="M5 8h10v8H5z" fill="#fff" />
        <path d="M5 8.500h10" stroke="#6f6f6f" />
        <path d="M5 11h10M5 13.500h10" stroke="#c4793f" strokeDasharray="1 1" />
        <path d="M21 7l3 3-9 8-3-2zM12 16l3 2-2 5-7 1c2-2 3-4 3-6z" fill="#2e6fa7" />
      </g>
    )}
    {kind === 'merge' && (
      <g>
        <path d="M11 15h13v9H11z" fill="#fcfcfc" />
        <path d="M12 18c2 3 6 3 10 0M19 16l3 2-2 3" fill="none" stroke="#2e6fa7" strokeWidth="2" />
      </g>
    )}
    {kind === 'image' && (
      <g>
        <path d="M10.500 10.500h13v13h-13z" fill="#fff" stroke="#777" />
        <path d="M12 22l4-6 2.500 3 1.500-2 3 5z" fill="#2e6fa7" />
      </g>
    )}
    {kind === 'text' && (
      <g>
        <path d="M9 9h15v15H9z" fill="#fcfcfc" />
        <text x="16.500" y="23.500" textAnchor="middle" fontFamily={uiFont} fontSize="18" fill="#555">A</text>
      </g>
    )}
  </svg>
);
const LookupIcon = () => (
  <svg width="17" height="17" viewBox="0 0 17 17">
    <circle cx="10" cy="7" r="6" fill="#fff" stroke="#2e6fa7" strokeWidth="1.700" />
    <path d="M5.500 11 1 15.500" stroke="#2e6fa7" strokeWidth="2.400" />
    <path d="M9.200 6h1.600v4.500H9.200zM9.200 3h1.600v1.600H9.200z" fill="#2e6fa7" />
  </svg>
);
const SplitIcon = () => (
  <svg width="14" height="14" viewBox="0 0 14 14" fill="none" stroke="#6d7f8e">
    <path d="M.5.500h13v13H.5zM0 5h14M0 9.500h14M5 5v9M9.500 5v9" />
  </svg>
);
const DirectionIcon = () => (
  <svg width="16" height="17" viewBox="0 0 16 17">
    <path d="M1.500 2v14M5 2v14M8.500 8v8M0 14l1.500 2L3 14M3.500 14 5 16l1.500-2M7 14l1.500 2 1.500-2" fill="none" stroke="#666" />
    <text x="12" y="9" textAnchor="middle" fontFamily={uiFont} fontSize="11" fill="#2e6fa7">A</text>
    <path d="M12 10v6M10.500 14l1.500 2 1.500-2" fill="none" stroke="#666" />
  </svg>
);
const PropertiesIcon = () => (
  <svg width="16" height="16" viewBox="0 0 16 16">
    <path d="M.5.500h11v11H.5z" fill="#ddd" stroke="#666" />
    <path d="M0 0h12v3H0z" fill="#666" />
    <path d="M4 3v8M8 3v8M0 7h12" stroke="#777" />
    <path d="M6.500 6.500h9v9h-9z" fill="#fff" stroke="#5c7e9c" />
    <path d="M8.500 9h2v1.500h-2zM12 9h2v1.500h-2zM8.500 12h2v1.500h-2zM12 12h2v1.500h-2z" fill="#2e6fa7" />
  </svg>
);
const LinkIcon = () => (
  <svg width="16" height="17" viewBox="0 0 16 17">
    <g fill="none" stroke="#777">
      <circle cx="7" cy="6" r="5.500" />
      <ellipse cx="7" cy="6" rx="2.500" ry="5.500" />
      <path d="M1.500 6h11M2.500 3h9M2.500 9h9" />
    </g>
    <rect x="1" y="10.500" width="8" height="5" rx="2.500" fill="#fff" stroke="#2e6fa7" strokeWidth="1.500" />
    <rect x="7" y="10.500" width="8" height="5" rx="2.500" fill="none" stroke="#2e6fa7" strokeWidth="1.500" />
  </svg>
);
const MenuCommentIcon = () => (
  <svg width="16" height="16" viewBox="0 0 16 16">
    <path d="M3.500 3.500h12v9h-7l-3 3v-3h-2z" fill="none" stroke="#8a8a8a" />
    <path d="M2 0h2v2h2v2H4v2H2V4H0V2h2z" fill="#6faa92" />
  </svg>
);

/* ---------- data ---------- */
type TableRow = { code?: string; label: string; head?: boolean; value?: string; total?: string };

const overall: TableRow[] = [
  { label: 'Total Numbers Attempted', head: true, total: '126,557' },
  { label: 'Invalid numbers', head: true },
  { label: 'Blocked' },
  { label: 'Business' },
  { label: 'Duplicate', value: '33' },
  { label: 'Invalid' },
  { code: 'U', label: 'Unresolved', head: true, total: '27,103' },
  { label: 'Callback' },
  { label: 'No answer / Answering machine' },
  { code: 'IS', label: 'In-scope – Not responding', head: true, total: '43,054' },
  { label: 'Household refusal' },
  { label: 'Respondent refusal' },
  { label: 'Illness, incapable' },
  { label: 'Selected respondent not available' },
  { label: 'Qualified respondent break-off' },
  { code: 'R', label: 'In-scope – Responding', head: true },
  { label: 'Language disqualify' },
  { label: 'Quota filled' },
  { label: 'Other disqualify' },
];

const Centered = ({ children }: { children?: React.ReactNode }) => (
  <CellText $origin="center">{children}</CellText>
);

const DispositionRow = ({ row }: { row: TableRow }) => (
  <Row>
    <Cell $bold $align="center" $noLeft><Centered>{row.code}</Centered></Cell>
    {row.head ? (
      <Cell colSpan={2} $bold $indent={7}><CellText>{row.label}</CellText></Cell>
    ) : (
      <>
        <Cell $indent={12}><CellText>{row.label}</CellText></Cell>
        <Cell $align="center"><Centered>{row.value}</Centered></Cell>
      </>
    )}
    <Cell $bold $align="center"><Centered>{row.total}</Centered></Cell>
  </Row>
);

const TableCols = () => (
  <colgroup>
    <col width="23" />
    <col width="282" />
    <col width="72" />
    <col width="73" />
  </colgroup>
);

export default function App() {
  return (
    <Window>
      <GlobalStyle />
      <Header>
        <Pattern width="399" height="65" viewBox="0 0 399 65">
          <defs>
            <pattern id="hex" width="84" height="66" patternUnits="userSpaceOnUse">
              <path d="M14 0h28l14 24-14 24H14L0 24z" fill="none" stroke="#17458c" strokeOpacity=".55" />
              <circle cx="28" cy="24" r="10" fill="none" stroke="#17458c" strokeOpacity=".55" />
              <path d="M56 24h28L70 48z" fill="#17458c" fillOpacity=".55" />
              <circle cx="70" cy="4" r="8" fill="#17458c" fillOpacity=".5" />
            </pattern>
          </defs>
          <rect width="300" height="65" fill="url(#hex)" />
        </Pattern>
        <TitleRow>
          <LeftZone>
            <QatSlot $w={29}><SaveIcon /></QatSlot>
            <QatSlot $w={36}><UndoIcon /><Caret $c="#fff" /></QatSlot>
            <QatSlot $w={33}><RedoIcon /></QatSlot>
            <QatSlot $w={7}><CustomizeIcon /></QatSlot>
            <DocTitle>reportwordac  -  Word</DocTitle>
          </LeftZone>
          <ToolsLabel>Table Tools</ToolsLabel>
          <RightZone>
            <UserName>Steve Hume</UserName>
            <WinButton $w={49}><DisplayIcon /></WinButton>
            <WinButton $w={45}><MinIcon /></WinButton>
            <WinButton $w={46}><MaxIcon /></WinButton>
            <WinButton $w={10}><CloseIcon /></WinButton>
          </RightZone>
        </TitleRow>
        <TabRow>
          <Tab $w={58}>File</Tab>
          <Tab $w={63}>Home</Tab>
          <Tab $w={60}>Insert</Tab>
          <Tab $w={63}>Design</Tab>
          <Tab $w={66}>Layout</Tab>
          <Tab $w={84}>References</Tab>
          <Tab $w={77}>Mailings</Tab>
          <Tab $w={64} $active>Review</Tab>
          <Tab $w={54}>View</Tab>
          <Tab $w={58}>Help</Tab>
          <Tab $w={63} $context>Design</Tab>
          <Tab $w={65} $context>Layout</Tab>
          <TellMe><BulbIcon />Tell me what you want to do</TellMe>
          <ShareBox>
            <ShareIcon />
            <ShareLabel>Share</ShareLabel>
            <CommentIcon />
          </ShareBox>
        </TabRow>
      </Header>

      <Ribbon>
        <Group $w={163}>
          <GroupBody>
            <Large $w={66}>
              <IconSlot><SpellIcon /></IconSlot>
              <LargeText>Spelling &amp;<br />Grammar</LargeText>
            </Large>
            <SmallCol $rowH={31} $pt={3}>
              <SmallRow><ThesaurusIcon />Thesaurus</SmallRow>
              <SmallRow><WordCountIcon />Word Count</SmallRow>
            </SmallCol>
          </GroupBody>
          <GroupLabel>Proofing</GroupLabel>
        </Group>
        <Group $w={50}>
          <GroupBody>
            <Large $w={50}>
              <IconSlot><ReadAloudIcon /></IconSlot>
              <LargeText>Read<br />Aloud</LargeText>
            </Large>
          </GroupBody>
          <GroupLabel>Speech</GroupLabel>
        </Group>
        <Group $w={80}>
          <GroupBody>
            <Large $w={79}>
              <IconSlot><AccessIcon /></IconSlot>
              <LargeText>Check<br />Accessibility</LargeText>
            </Large>
          </GroupBody>
          <GroupLabel>Accessibility</GroupLabel>
        </Group>
        <Group $w={117}>
          <GroupBody>
            <Large $w={59}>
              <IconSlot><TranslateIcon /></IconSlot>
              <LargeText>Translate</LargeText>
              <CaretLine><Caret /></CaretLine>
            </Large>
            <Large $w={52}>
              <IconSlot><LanguageIcon /></IconSlot>
              <LargeText>Language</LargeText>
              <CaretLine><Caret /></CaretLine>
            </Large>
          </GroupBody>
          <GroupLabel>Language</GroupLabel>
        </Group>
        <Group $w={230}>
          <GroupBody>
            <Large $w={68}>
              <IconSlot><NewCommentIcon /></IconSlot>
              <LargeText>New<br />Comment</LargeText>
            </Large>
            <Large $w={32} $dim>
              <IconSlot><DeleteCommentIcon /></IconSlot>
              <LargeText>Delete</LargeText>
              <CaretLine><Caret $c="#b5b5b5" /></CaretLine>
            </Large>
            <SmallCol $ml={7}>
              <SmallRow $dim><StepIcon />Previous</SmallRow>
              <SmallRow $dim><StepIcon next />Next</SmallRow>
              <SmallRow $on $w={119}><ShowCommentsIcon />Show Comments</SmallRow>
            </SmallCol>
          </GroupBody>
          <GroupLabel>Comments</GroupLabel>
        </Group>
        <Group $w={196}>
          <GroupBody>
            <Large $w={68}>
              <IconSlot><TrackIcon /></IconSlot>
              <LargeText>Track<br />Changes<CaretAfter /></LargeText>
            </Large>
            <SmallCol $ml={-3}>
              <SmallRow><DisplayReviewIcon /><MarkupBox>Simple Markup<Caret /></MarkupBox></SmallRow>
              <SmallRow $gap={5} $ml={4}><ShowMarkupIcon />Show Markup <Caret /></SmallRow>
              <SmallRow><ReviewPaneIcon /><SpreadLabel $w={100}>Reviewing Pane<Caret /></SpreadLabel></SmallRow>
            </SmallCol>
          </GroupBody>
          <GroupLabel>Tracking<Launcher><LauncherIcon /></Launcher></GroupLabel>
        </Group>
        <Group $w={85}>
          <GroupBody>
            <Large $w={47}>
              <IconSlot><AcceptIcon /></IconSlot>
              <LargeText>Accept</LargeText>
              <CaretLine><Caret /></CaretLine>
            </Large>
            <SmallCol>
              <SmallRow $gap={9}><SmallDoc kind="x" /><Caret /></SmallRow>
              <SmallRow><SmallDoc kind="prev" /></SmallRow>
              <SmallRow><SmallDoc kind="next" /></SmallRow>
            </SmallCol>
          </GroupBody>
          <GroupLabel>Changes</GroupLabel>
        </Group>
        <Group $w={64}>
          <GroupBody>
            <Large $w={63}>
              <IconSlot><CompareIcon /></IconSlot>
              <LargeText>Compare</LargeText>
              <CaretLine><Caret /></CaretLine>
            </Large>
          </GroupBody>
          <GroupLabel>Compare</GroupLabel>
        </Group>
        <Group $w={45}>
          <GroupBody>
            <Large $w={44}>
              <FramedIcon><ProtectIcon /></FramedIcon>
              <LargeText>Protect</LargeText>
              <CaretLine><Caret /></CaretLine>
            </Large>
          </GroupBody>
          <GroupLabel />
        </Group>
        <Group $w={44}>
          <GroupBody>
            <Large $w={43}>
              <FramedIcon><InkIcon /></FramedIcon>
              <LargeText>Ink</LargeText>
              <CaretLine><Caret /></CaretLine>
            </Large>
          </GroupBody>
          <GroupLabel />
        </Group>
        <Group $w={61}>
          <GroupBody>
            <Large $w={60}>
              <IconSlot><ResumeIcon /></IconSlot>
              <LargeText>Resume<br />Assistant</LargeText>
            </Large>
          </GroupBody>
          <GroupLabel>Resume</GroupLabel>
        </Group>
        <Group $w={40} $last>
          <GroupBody />
          <GroupLabel><CollapseIcon /></GroupLabel>
        </Group>
      </Ribbon>

      <Body>
        <DocArea>
          <Page $first>
            <Heading>
              <HeadingNum>1.6</HeadingNum>
              <span>S<SmallCap>URVEY</SmallCap> R<SmallCap>ESPONSE</SmallCap> R<SmallCap>ATE</SmallCap></span>
            </Heading>
            <Para>
              <Line $indent $just>The tables below provide the call disposition and the response rate for the survey using MRIA</Line>
              <Line>calculations.</Line>
            </Para>
            <Para $mt={19}>
              <Line $indent $just>The empirical response rate for the completed interviews was 12.5% for the landline telephone</Line>
              <Line $just>sample and 6.8% for the cell sample (9.8% overall). The response rate is calculated by dividing the in-scope</Line>
              <Line>responding eligible by the total (functional) sample – see tables below.</Line>
            </Para>
            <TableTitle>
              <TitleText>Call Disposition - Overall</TitleText>
              <MoveHandle><DragIcon /></MoveHandle>
            </TableTitle>
            <DataTable>
              <TableCols />
              <tbody>
                {overall.map((row) => (
                  <DispositionRow key={row.label} row={row} />
                ))}
              </tbody>
            </DataTable>
            <PageFooter><FooterText>RESEARCH ASSOCIATES, 2017 • <b>10</b></FooterText></PageFooter>
          </Page>
          <Page>
            <DataTable>
              <TableCols />
              <tbody>
                <Row>
                  <Cell $noLeft />
                  <Cell $indent={12}><CellText>Completed interviews</CellText></Cell>
                  <Cell $align="center"><Centered>6,048</Centered></Cell>
                  <Cell />
                </Row>
                <Row>
                  <Cell $noLeft />
                  <Cell colSpan={2} $bold $align="right"><CellText $origin="right">Total (U + IS + R)</CellText></Cell>
                  <Cell $bold $align="center"><Centered>77,707</Centered></Cell>
                </Row>
                <Row>
                  <Cell $noLeft />
                  <Cell colSpan={2} $bold $align="right"><CellText $origin="right">RESPONSE RATE (R divided by Total)</CellText></Cell>
                  <Cell $bold $align="center"><Centered>9.8%</Centered></Cell>
                </Row>
              </tbody>
            </DataTable>
          </Page>
        </DocArea>

        <Pane>
          <PaneTop>
            <PaneTitle>Accessibility Checker</PaneTitle>
            <PaneMenu>
              <svg width="9" height="5" viewBox="0 0 9 5"><path d="M0 0h9L4.500 5z" fill="#777" /></svg>
            </PaneMenu>
            <PaneClose><CloseIcon c="#6a6a6a" s={10} w={2} /></PaneClose>
          </PaneTop>
          <Inspection>Inspection Results</Inspection>
          <ListBox>
            <ListHead>Warnings</ListHead>
            <ListGroup>
              <ListRow>
                <Twist>
                  <svg width="6" height="9" viewBox="0 0 6 9"><path d="M.5.500l5 4-5 4z" fill="#fff" stroke="#888" /></svg>
                </Twist>
                Repeated blank characters (26)
              </ListRow>
            </ListGroup>
            <ListHead>Tips</ListHead>
            <ListGroup>
              <ListRow>
                <Twist>
                  <svg width="8" height="8" viewBox="0 0 8 8"><path d="M0 7h7V0z" fill="#444" /></svg>
                </Twist>
                Check reading order
              </ListRow>
              <ListRow>Table</ListRow>
              <ListRow>Table</ListRow>
              <ListRow $sel>Table</ListRow>
              <ListRow>Table</ListRow>
              <ListRow>Table</ListRow>
            </ListGroup>
          </ListBox>
          <InfoHead>
            Additional Information
            <svg width="9" height="6" viewBox="0 0 9 6"><path d="M1 1l3.500 3.500L8 1" fill="none" stroke="#777" strokeWidth="1.500" /></svg>
          </InfoHead>
          <InfoTitle>Why Fix?</InfoTitle>
          <InfoText>{'Screen readers might read the text in a layout in\nan unexpected order. Test the reading order in a\nlayout table to be sure that it makes sense.'}</InfoText>
          <InfoTitle>Steps To Fix:</InfoTitle>
          <InfoText>{'Use the tab key to navigate through table cells\none at a time, and verify that reading  order\nmakes sense for the information.'}</InfoText>
        </Pane>
      </Body>

      <MiniBar>
        <MiniLeft>
          <MiniRow>
            <Combo $w={66}>Arial Narı<Caret /></Combo>
            <Combo $w={46}>9<Caret /></Combo>
            <MiniTool $w={22}><GrowIcon up /></MiniTool>
            <MiniTool $w={22}><GrowIcon up={false} /></MiniTool>
            <MiniTool $w={32}><BulletsIcon /><Caret /></MiniTool>
            <MiniTool $w={34}><NumberingIcon /><Caret /></MiniTool>
          </MiniRow>
          <MiniRow>
            <MiniTool $w={22}><b>B</b></MiniTool>
            <MiniTool $w={22}><i>I</i></MiniTool>
            <MiniTool $w={23}><AlignIcon /></MiniTool>
            <MiniTool $w={34}><HighlightIcon /><Caret /></MiniTool>
            <MiniTool $w={34}><FontColorIcon /><Caret /></MiniTool>
            <MiniTool $w={34}><ShadeIcon /><Caret /></MiniTool>
            <MiniTool $w={34} $on><BordersIcon /><Caret /></MiniTool>
            <MiniTool $w={20}><PainterIcon /></MiniTool>
          </MiniRow>
        </MiniLeft>
        <MiniRight>
          <TableTool>
            <TableToolIcon><InsertTableIcon /><Caret /></TableToolIcon>
            Insert
          </TableTool>
          <TableTool>
            <TableToolIcon><DeleteTableIcon /><Caret /></TableToolIcon>
            Delete
          </TableTool>
        </MiniRight>
      </MiniBar>

      <Menu>
        <MenuItem $dim><MenuIcon><CutIcon /></MenuIcon><span>Cu<u>t</u></span></MenuItem>
        <MenuItem $dim><MenuIcon><CopyIcon /></MenuIcon><span><u>C</u>opy</span></MenuItem>
        <PasteHead>
          <PasteIconWrap><PasteMenuIcon /></PasteIconWrap>
          <PasteLabel>Paste Options:</PasteLabel>
        </PasteHead>
        <PasteRow>
          <PasteOption kind="keep" />
          <PasteOption kind="merge" />
          <PasteOption kind="image" />
          <PasteOption kind="text" />
        </PasteRow>
        <MenuSep />
        <MenuItem><MenuIcon><LookupIcon /></MenuIcon><span>Smart <u>L</u>ookup</span></MenuItem>
        <MenuItem><span /><span>S<u>y</u>nonyms</span><MenuArrow /></MenuItem>
        <MenuItem><MenuIcon><TranslateIcon s={18} /></MenuIcon><span>Tran<u>s</u>late</span></MenuItem>
        <MenuSep />
        <MenuItem><span /><span><u>I</u>nsert</span><MenuArrow /></MenuItem>
        <MenuItem><span /><span><u>D</u>elete Cells...</span></MenuItem>
        <MenuItem><MenuIcon><SplitIcon /></MenuIcon><span>S<u>p</u>lit Cells...</span></MenuItem>
        <MenuSep />
        <MenuItem><span /><span><u>B</u>order Styles</span><MenuArrow $split /></MenuItem>
        <MenuItem><MenuIcon><DirectionIcon /></MenuIcon><span>Te<u>x</u>t Direction...</span></MenuItem>
        <MenuItem $active><MenuIcon><PropertiesIcon /></MenuIcon><span>Table P<u>r</u>operties...</span></MenuItem>
        <MenuSep />
        <MenuItem><MenuIcon><LinkIcon /></MenuIcon><span>L<u>i</u>nk</span><MenuArrow $split /></MenuItem>
        <MenuItem $soft><MenuIcon><MenuCommentIcon /></MenuIcon><span>New Co<u>m</u>ment</span></MenuItem>
      </Menu>

      <Caption>select table properties</Caption>

      <Pointer width="13" height="20" viewBox="0 0 13 20">
        <path d="M.5.500v16l4-3.500 2.500 6 2.500-1-2.500-6H12z" fill="#fff" stroke="#000" />
      </Pointer>
    </Window>
  );
}
